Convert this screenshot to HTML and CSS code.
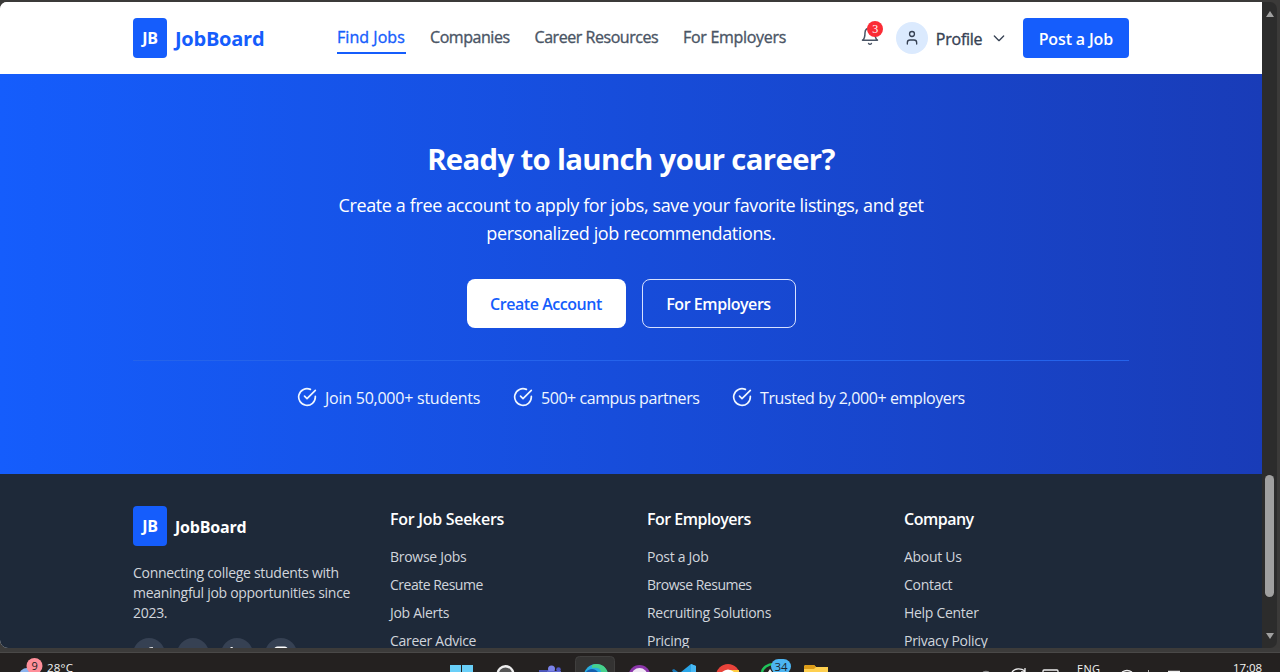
FILE: index.html
```html
<!DOCTYPE html>
<html lang="en">
<head>
<meta charset="utf-8">
<title>JobBoard</title>
<link rel="stylesheet" href="styles.css">
</head>
<body>
<div class="window">
  <div class="page">
    <header class="header">
      <div class="container header-row">
        <div class="brand"><span class="mark">JB</span><span class="brand-name">JobBoard</span></div>
        <nav class="nav">
          <a class="active nav-find">Find Jobs</a><a class="nav-companies">Companies</a><a class="nav-career">Career Resources</a><a class="nav-employers">For Employers</a>
        </nav>
        <div class="actions">
          <div class="bell">
            <svg width="20" height="20" viewBox="0 0 24 24" fill="none" stroke="currentColor" stroke-width="1.8" stroke-linecap="round" stroke-linejoin="round"><path d="M6 8a6 6 0 0 1 12 0c0 7 3 9 3 9H3s3-2 3-9"/><path d="M10.3 21a1.94 1.94 0 0 0 3.4 0"/></svg>
            <span class="count">3</span>
          </div>
          <div class="avatar"><svg width="16" height="16" viewBox="0 0 24 24" fill="none" stroke="currentColor" stroke-width="2" stroke-linecap="round" stroke-linejoin="round"><circle cx="12" cy="6" r="3.700"/><path d="M19 21v-2a4 4 0 0 0-4-4H9a4 4 0 0 0-4 4v2"/></svg></div>
          <span class="profile">Profile</span>
          <svg class="chevron" width="16" height="16" viewBox="0 0 24 24" fill="none" stroke="currentColor" stroke-width="2" stroke-linecap="round" stroke-linejoin="round"><path d="m5 9 7 7 7-7"/></svg>
          <a class="post">Post a Job</a>
        </div>
      </div>
    </header>
    <section class="hero">
      <div class="container">
        <h1>Ready to launch your career?</h1>
        <p class="lead">Create a free account to apply for jobs, save your favorite listings, and get<br>personalized job recommendations.</p>
        <div class="buttons"><a class="btn solid">Create Account</a><a class="btn outline">For Employers</a></div>
        <div class="stats">
          <div class="stat students"><svg width="20" height="20" viewBox="0 0 24 24"><path d="M22 11.1V12a10 10 0 1 1-5.93-9.14"/><path d="m9 11 3 3L22 4"/></svg><span>Join 50,000+ students</span></div>
          <div class="stat partners"><svg width="20" height="20" viewBox="0 0 24 24"><path d="M22 11.1V12a10 10 0 1 1-5.93-9.14"/><path d="m9 11 3 3L22 4"/></svg><span>500+ campus partners</span></div>
          <div class="stat employers"><svg width="20" height="20" viewBox="0 0 24 24"><path d="M22 11.1V12a10 10 0 1 1-5.93-9.14"/><path d="m9 11 3 3L22 4"/></svg><span>Trusted by 2,000+ employers</span></div>
        </div>
      </div>
    </section>
    <footer class="footer">
      <div class="container columns">
        <div class="about">
          <div class="brand"><span class="mark">JB</span><span class="foot-name">JobBoard</span></div>
          <p>Connecting college students with<br>meaningful job opportunities since<br>2023.</p>
          <div class="social">
            <span><svg width="16" height="16" viewBox="0 0 24 24" fill="currentColor"><path d="M18 2h-3a5 5 0 0 0-5 5v3H7v4h3v8h4v-8h3l1-4h-4V7a1 1 0 0 1 1-1h3z"/></svg></span>
            <span><svg width="16" height="16" viewBox="0 0 24 24" fill="currentColor"><path d="M22 4.5c-1 .7-2 1-3 1.2a4.5 4.5 0 0 0-8 4.3C7 10 4 8 2 5c-2 5 1 8 2 9l-2-.5c0 3 2 4 4 4.5-1 2-3 2-5 2 9 5 20 0 19-12z"/></svg></span>
            <span><svg width="16" height="16" viewBox="0 0 24 24" fill="currentColor"><circle cx="4" cy="4" r="2.4"/><path d="M2 9h4v12H2zm7 0h4v2c3-4 9-2 9 3v7h-4v-6c0-4-5-4-5 0v6H9z"/></svg></span>
            <span><svg width="16" height="16" viewBox="0 0 24 24" fill="none" stroke="currentColor" stroke-width="2.5"><rect x="2" y="2" width="20" height="20" rx="5"/><circle cx="12" cy="12" r="4"/></svg></span>
          </div>
        </div>
        <div class="links"><h2>For Job Seekers</h2><a>Browse Jobs</a><a class="tight">Create Resume</a><a>Job Alerts</a><a>Career Advice</a></div>
        <div class="links"><h2 class="tight">For Employers</h2><a>Post a Job</a><a class="tight">Browse Resumes</a><a>Recruiting Solutions</a><a>Pricing</a></div>
        <div class="links"><h2 class="tight">Company</h2><a>About Us</a><a>Contact</a><a>Help Center</a><a>Privacy Policy</a></div>
      </div>
    </footer>
  </div>
  <div class="scrollbar">
    <svg class="arrow" width="10" height="8" viewBox="0 0 10 8"><path d="M5 1 9 7H1z"/></svg>
    <div class="thumb"></div>
    <svg class="arrow" width="10" height="8" viewBox="0 0 10 8"><path d="M5 7 1 1h8z"/></svg>
  </div>
</div>
<div class="taskbar">
  <svg width="1280" height="20" viewBox="0 652 1280 20">
    <circle cx="27" cy="676" r="8" fill="#8bb4ee"/>
    <circle cx="34.500" cy="666" r="8" fill="#ff8f9a"/>
    <path d="M450 665h11v7h-11zM462 665h11v7h-11z" fill="#69cff8"/>
    <circle cx="505.500" cy="674" r="7.800" fill="#555" stroke="#eee" stroke-width="2.400"/>
    <path d="M539 670h15v2h-15z" fill="#4c55b8"/><circle cx="551.500" cy="669" r="3.500" fill="#7b83eb"/><circle cx="558.500" cy="669.500" r="2.300" fill="#5059c9"/><path d="M547 671h14v2h-14z" fill="#6169d0"/>
    <rect x="575.500" y="656.500" width="39" height="20" rx="4" fill="#343332" stroke="#403f3e"/>
    <circle cx="596" cy="676" r="12" fill="#29aee0"/><path d="M592 665c7-3 15 1 16 9l-7-2c0-4-5-5-9-4z" fill="#46d28c"/><path d="M586 672c2-3 8-5 12 0z" fill="#145fae"/>
    <circle cx="639.500" cy="676" r="11" fill="#8b36a9"/><circle cx="639.500" cy="676" r="8" fill="#f0e8f5"/>
    <path d="m681 672 10-8 5 2v6z" fill="#29a5e8"/><path d="m672 670 2-1 4 3h-5z" fill="#187ab8"/><path d="m691 664 5 2v6h-5z" fill="#48b9f5"/>
    <circle cx="728" cy="676" r="12" fill="#e8433a"/><path d="M730 670h9v2h-9z" fill="#ffcd40"/><path d="M722 672q6-5 12 0z" fill="#fff"/>
    <path d="M762 672c1-4 5-8 12-8" fill="none" stroke="#20c45a" stroke-width="2.500"/><path d="M768 672l2-3 2 3z" fill="#eee"/>
    <rect x="771" y="659" width="20" height="15" rx="7.500" fill="#4cb5f2"/>
    <path d="M804 667q0-2 2-2h8l2 2h12v5h-24z" fill="#ffd04f"/><path d="M804 667q0-2 2-2h8l2 2-2 2h-10z" fill="#dc9c18"/>
    <g fill="none" stroke="#eee" stroke-width="1.300"><path stroke="#888" d="M983 672q3-1 6 0"/><path d="M1012 672c3-4 9-4 13-1m0-3v4h-4"/><path d="M1043 672v-1q0-1 1-1h13q1 0 1 1v1"/><path d="M1122 672q5-3 10 0M1148 671h1M1168 671.500h12"/></g>
    <g fill="#f4f4f4" font-family="Open Sans, Noto Sans, sans-serif">
      <text x="31.500" y="670" font-size="11" fill="#222">9</text>
      <text x="47" y="671.500" font-size="11.500" textLength="26">28°C</text>
      <text x="774.500" y="671" font-size="11.500" fill="#1b2730" textLength="13">34</text>
      <text x="1077" y="673" font-size="11" textLength="23">ENG</text>
      <text x="1233" y="671.500" font-size="11.500" textLength="29">17:08</text>
    </g>
  </svg>
</div>
</body>
</html>
```
FILE: styles.css
```css
* { box-sizing: border-box; }
body { margin: 0; width: 1280px; height: 672px; overflow: hidden; background: #3b3a39; font: 16px/24px "Open Sans", "Noto Sans", sans-serif; letter-spacing: -0.448px; white-space: nowrap; }
h1, h2, p { margin: 0; }
.window { display: flex; height: 648px; padding: 2px 3px 0 0; }
.page { width: 1262px; height: 646px; overflow: hidden; border-radius: 7px 0 0 8px; background: #fff; }
.container { width: 996px; margin: 0 auto; }
.header { height: 72px; padding-top: 16px; background: #fff; }
.header-row { display: flex; align-items: flex-start; }
.brand { display: flex; align-items: center; gap: 8px; }
.mark { width: 34px; height: 40px; line-height: 41px; border-radius: 4px; background: #155dfc; color: #fff; font-weight: 700; text-align: center; letter-spacing: -0.2px; }
.brand-name { color: #155dfc; font-size: 20px; font-weight: 700; height: 40px; line-height: 41px; width: 90px; letter-spacing: -0.25px; }
.header .brand { width: 204px; }
.nav { display: flex; gap: 24px; padding-top: 5px; width: 522px; color: #4a5565; }
.nav a, .profile { -webkit-text-stroke: 0.35px currentColor; }
.nav a { height: 31px; line-height: 28px; }
.nav .active { color: #155dfc; border-bottom: 2px solid #155dfc; }
.nav .nav-find { width: 69px; letter-spacing: 0.05px; }
.nav-companies { width: 80.500px; }
.nav-career { width: 124.500px; }
.nav-employers { width: 104px; letter-spacing: -0.3px; }
.actions { display: flex; height: 40px; align-items: center; color: #364153; width: 270px; }
.bell { position: relative; height: 20px; width: 37px; margin-top: -5px; color: #4a5565; }
.bell > svg { margin-left: 1px; }
.count { position: absolute; left: 8px; top: -5px; width: 16px; height: 16px; border-radius: 50%; background: #fb2c36; color: #fff; font: 12px/17px "Liberation Serif", serif; text-align: center; }
.avatar { width: 32px; height: 32px; border-radius: 50%; background: #dbeafe; display: grid; place-items: center; margin-right: 8px; }
.profile { width: 55px; height: 40px; line-height: 42px; letter-spacing: -0.25px; }
.chevron { width: 16px; margin-right: 16px; }
.post { width: 106.500px; height: 40px; line-height: 42px; border-radius: 4px; background: #155dfc; color: #fff; text-align: center; font-weight: 600; letter-spacing: -0.15px; }
.hero { height: 399.500px; padding-top: 64px; background: linear-gradient(to right, #155dfc, #193cb8); color: #fff; text-align: center; }
h1 { font-size: 29.300px; line-height: 42px; height: 53px; font-weight: 700; letter-spacing: -0.64px; }
.lead { font-size: 18px; line-height: 28px; height: 88px; letter-spacing: -0.38px; }
.buttons { display: flex; justify-content: center; gap: 16px; height: 82px; }
.btn { height: 49px; line-height: 51px; border-radius: 8px; font-weight: 600; }
.solid { width: 159px; background: #fff; color: #155dfc; }
.outline { width: 154px; border: 1px solid #d7e1ff; line-height: 49px; }
.stats { display: flex; justify-content: center; gap: 32px; border-top: 1px solid #2563eb; margin-top: -1px; padding-top: 26px; color: #eff6ff; }
.stat { display: flex; gap: 8px; text-align: left; }
.stat svg { fill: none; stroke: currentColor; stroke-width: 2; stroke-linecap: round; stroke-linejoin: round; }
.stat span { line-height: 23px; }
.students { width: 184px; letter-spacing: -0.24px; }
.partners { width: 187px; }
.employers { width: 233px; letter-spacing: -0.41px; }
.footer { height: 175px; padding-top: 32px; background: #1e2939; color: #d1d5dc; font-size: 14px; line-height: 20px; letter-spacing: -0.29px; }
.columns { display: grid; grid-template-columns: repeat(4, 225px); gap: 32px; }
.footer .brand { height: 41px; margin-bottom: 16.500px; font-size: 16px; }
.foot-name { color: #fff; font-weight: 700; height: 40px; line-height: 42px; letter-spacing: -0.2px; }
.social { display: flex; gap: 12px; margin-top: 15px; }
.social span { width: 32px; height: 32px; border-radius: 50%; background: #364153; display: grid; place-items: center; color: #fff; }
.links { display: flex; flex-direction: column; gap: 8px; }
.links h2 { color: #fff; font-size: 16px; line-height: 27px; height: 28px; font-weight: 600; margin-bottom: 5.500px; }
.links .tight { letter-spacing: -0.5px; }
.scrollbar { width: 15px; height: 646px; border-radius: 0 7px 7px 0; background: #2c2c2c; padding: 8px 0; display: flex; flex-direction: column; align-items: center; }
.arrow { fill: #a0a0a0; }
.thumb { width: 9px; height: 122px; border-radius: 5px; background: #a0a0a0; margin: 457px 0 35px; }
.taskbar { height: 24px; padding-top: 4px; background: linear-gradient(#3c3b3a 4px, #4a4948 4px, #4a4948 5px, #242120 5px); }
.taskbar svg { display: block; letter-spacing: 0; }
```
